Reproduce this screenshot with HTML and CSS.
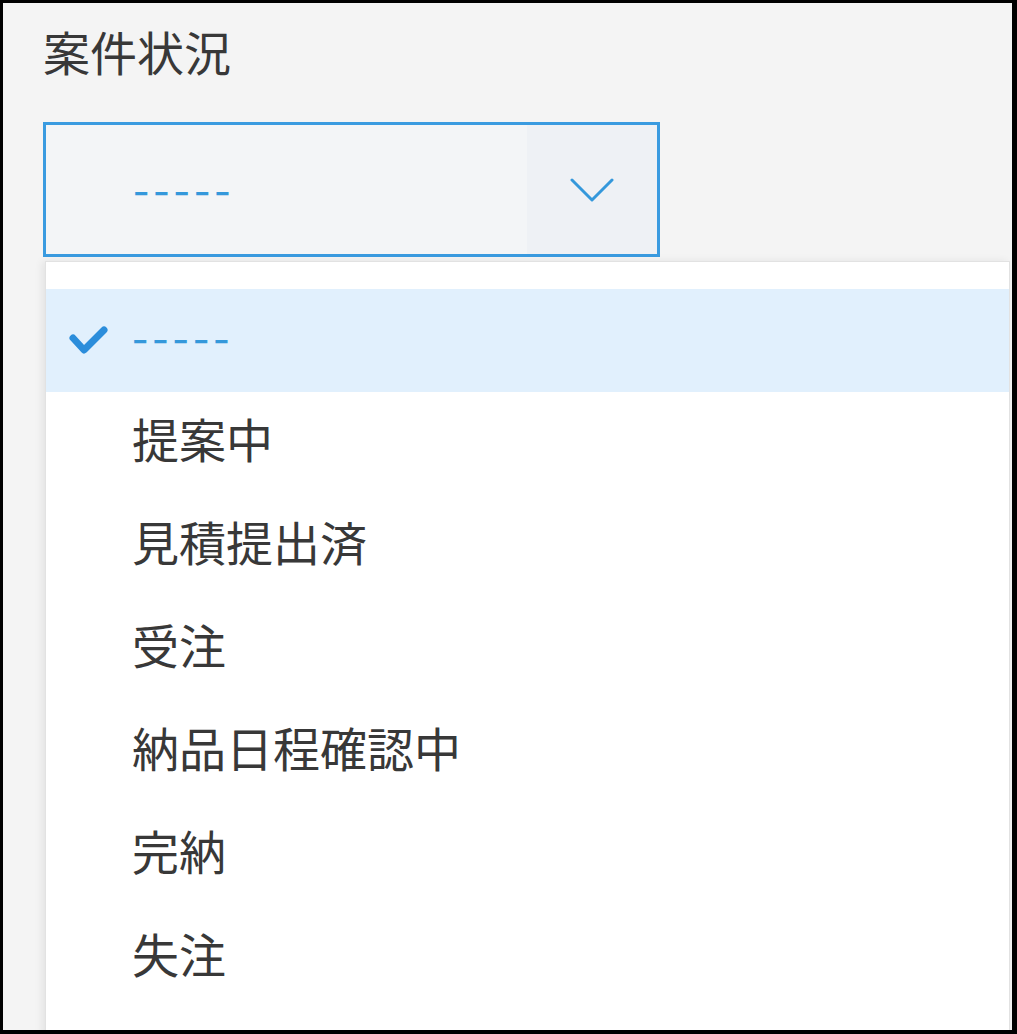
FILE: index.html
```html
<!DOCTYPE html>
<html lang="ja">
<head>
<meta charset="utf-8">
<title>案件状況</title>
<link rel="stylesheet" href="styles.css">
</head>
<body>
<div class="frame">
  <div class="field">
    <label class="field-label">案件状況</label>
    <div class="select">
      <div class="select-value"><span class="select-text">-----</span></div>
      <div class="select-arrow">
        <svg width="44" height="26" viewBox="0 0 44 26"><polyline points="2,3 22,23 42,3" fill="none" stroke="#3498db" stroke-width="3" stroke-linecap="round" stroke-linejoin="round"/></svg>
      </div>
    </div>
    <ul class="menu">
      <li class="menu-item is-selected">
        <span class="menu-icon"><svg width="40" height="32" viewBox="0 0 40 32"><polyline points="4,13 15,25 35,5" fill="none" stroke="#2b8ddb" stroke-width="7" stroke-linecap="round" stroke-linejoin="round"/></svg></span>
        <span class="menu-text dashes">-----</span>
      </li>
      <li class="menu-item"><span class="menu-icon"></span><span class="menu-text">提案中</span></li>
      <li class="menu-item"><span class="menu-icon"></span><span class="menu-text">見積提出済</span></li>
      <li class="menu-item"><span class="menu-icon"></span><span class="menu-text">受注</span></li>
      <li class="menu-item"><span class="menu-icon"></span><span class="menu-text">納品日程確認中</span></li>
      <li class="menu-item"><span class="menu-icon"></span><span class="menu-text">完納</span></li>
      <li class="menu-item"><span class="menu-icon"></span><span class="menu-text">失注</span></li>
    </ul>
  </div>
</div>
</body>
</html>
```
FILE: styles.css
```css
html, body {
  margin: 0;
  padding: 0;
  background: #000;
}
body {
  font-family: "Noto Sans CJK JP", "Noto Sans", sans-serif;
  color: #333;
}
.frame {
  box-sizing: border-box;
  height: 1034px;
  width: 1017px;
  border-style: solid;
  border-color: #000;
  border-width: 3px 5px 4px 3px;
  background: #f4f4f4;
  overflow: hidden;
  padding: 18px 0 0 40px;
}
.field-label {
  display: block;
  height: 60px;
  line-height: 60px;
  font-size: 47px;
  color: #383838;
  margin-bottom: 41px;
}
.select {
  box-sizing: border-box;
  width: 617px;
  height: 135px;
  border: 3px solid #3a9be0;
  background: #f3f5f7;
  display: flex;
}
.select-value {
  flex: 1;
  padding-left: 87px;
  display: flex;
  align-items: center;
  font-size: 47px;
  color: #3498db;
}
.select-text {
  margin-bottom: 7px;
  letter-spacing: 4px;
}
.select-arrow {
  width: 130px;
  background: #eef1f5;
  display: flex;
  align-items: center;
  justify-content: center;
}
.menu {
  list-style: none;
  margin: 4px 0 0 2px;
  padding: 27px 0 0 0;
  box-sizing: border-box;
  width: 965px;
  height: 800px;
  background: #fff;
  border: 1px solid #e2e2e2;
  box-shadow: -3px 0 8px rgba(0, 0, 0, 0.07);
}
.menu-item {
  height: 103px;
  display: flex;
  align-items: center;
  font-size: 47px;
  color: #383838;
}
.menu-item.is-selected {
  background: #e1f0fd;
}
.menu-icon {
  box-sizing: border-box;
  width: 86px;
  padding-left: 23px;
  display: flex;
  align-items: center;
}
.menu-text {
  margin-bottom: 13px;
}
.dashes {
  color: #3498db;
  letter-spacing: 4px;
}
```
